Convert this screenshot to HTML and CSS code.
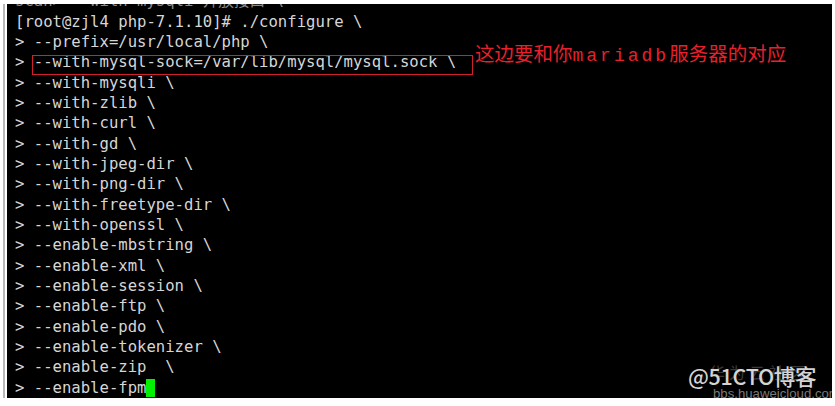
FILE: index.html
```html
<!DOCTYPE html>
<html lang="zh">
<head>
<meta charset="utf-8">
<title>configure</title>
<link rel="stylesheet" href="styles.css">
</head>
<body>
<div class="frame">
  <div class="rule"></div>
  <div class="terminal">
    <div class="lines">
      <div class="ln ghost">scan&gt; --with-mysqli 开放接口 \</div>
      <div class="ln">[root@zjl4 php-7.1.10]# ./configure \</div>
      <div class="ln">&gt; --prefix=/usr/local/php \</div>
      <div class="ln">&gt; --with-mysql-sock=/var/lib/mysql/mysql.sock \</div>
      <div class="ln">&gt; --with-mysqli \</div>
      <div class="ln">&gt; --with-zlib \</div>
      <div class="ln">&gt; --with-curl \</div>
      <div class="ln">&gt; --with-gd \</div>
      <div class="ln">&gt; --with-jpeg-dir \</div>
      <div class="ln">&gt; --with-png-dir \</div>
      <div class="ln">&gt; --with-freetype-dir \</div>
      <div class="ln">&gt; --with-openssl \</div>
      <div class="ln">&gt; --enable-mbstring \</div>
      <div class="ln">&gt; --enable-xml \</div>
      <div class="ln">&gt; --enable-session \</div>
      <div class="ln">&gt; --enable-ftp \</div>
      <div class="ln">&gt; --enable-pdo \</div>
      <div class="ln">&gt; --enable-tokenizer \</div>
      <div class="ln">&gt; --enable-zip  \</div>
      <div class="ln">&gt; --enable-fpm<span class="cursor"></span></div>
    </div>
    <div class="mark-box"></div>
    <div class="note">这边要和你<span class="note-latin">mariadb</span>服务器的对应</div>
    <div class="wm">
      <div class="wm-ghost">华为云社区</div>
      <div class="wm-main">@51CTO博客</div>
      <div class="wm-sub">bbs.huaweicloud.com</div>
    </div>
  </div>
</div>
</body>
</html>
```
FILE: styles.css
```css
html, body {
  margin: 0;
  padding: 0;
  background: #ffffff;
}
body {
  width: 835px;
  height: 406px;
  overflow: hidden;
}
.frame {
  display: flex;
  height: 406px;
  padding: 4px 3px 8px 3px;
  box-sizing: border-box;
}
.rule {
  width: 2px;
  background: #b8b8b8;
  margin-right: 2px;
  flex: none;
}
.terminal {
  position: relative;
  flex: 1;
  background: #000000;
  overflow: hidden;
  padding-left: 8px;
}
.lines {
  margin-top: -12.6px;
  font-family: "DejaVu Sans Mono", "Noto Sans CJK SC", monospace;
  font-size: 15.6px;
  color: #d6d6d6;
}
.ln {
  height: 20.33px;
  line-height: 20.33px;
  white-space: pre;
}
.ghost {
  color: #8a8a8a;
}
.cursor {
  display: inline-block;
  width: 9px;
  height: 18px;
  background: #00f000;
  vertical-align: -4px;
}
.mark-box {
  position: absolute;
  left: 25px;
  top: 51px;
  width: 439px;
  height: 18px;
  border: 1.5px solid #d0202c;
}
.note {
  position: absolute;
  left: 468px;
  top: 37px;
  font-family: "Noto Sans CJK SC", sans-serif;
  font-size: 19.5px;
  line-height: 24px;
  color: #e8202c;
  white-space: nowrap;
}
.note-latin {
  font-family: "Liberation Mono", "DejaVu Sans Mono", monospace;
  font-size: 18px;
  font-weight: 400;
  letter-spacing: 3px;
}
.wm {
  position: absolute;
  left: 680px;
  top: 356px;
  width: 145px;
  height: 40px;
}
.wm-ghost {
  position: absolute;
  left: 22px;
  top: 0;
  font-family: "Noto Sans CJK SC", sans-serif;
  font-size: 16px;
  color: #3a3a3a;
  letter-spacing: 4px;
}
.wm-main {
  position: absolute;
  left: 1px;
  top: 3px;
  font-family: "Noto Sans CJK SC", "Noto Sans", sans-serif;
  font-size: 21.5px;
  line-height: 26px;
  font-weight: 500;
  color: #d4d4d4;
  letter-spacing: -0.3px;
  white-space: nowrap;
}
.wm-sub {
  position: absolute;
  left: 26px;
  top: 27px;
  font-family: "Liberation Sans", sans-serif;
  font-size: 13.2px;
  line-height: 14px;
  color: #7a7a7a;
  white-space: nowrap;
}
```
